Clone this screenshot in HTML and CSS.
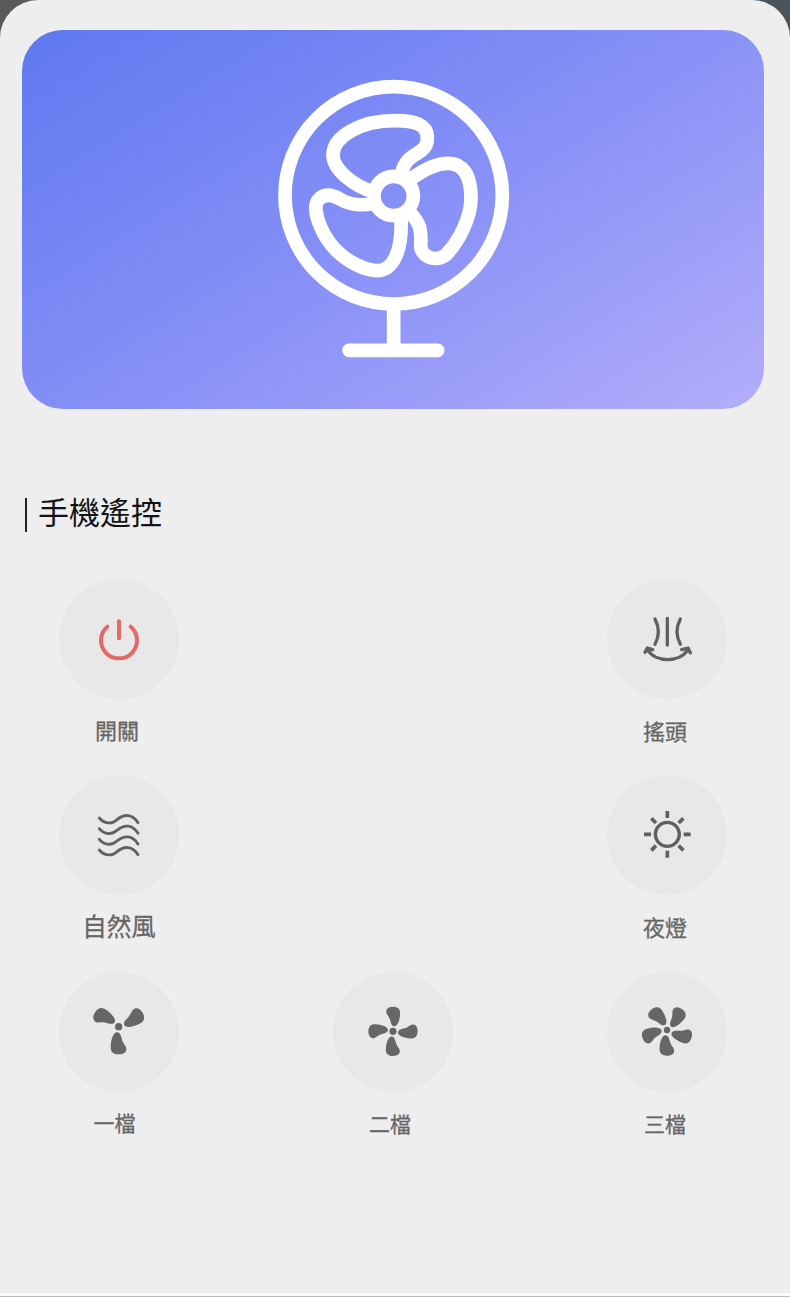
FILE: index.html
```html
<!DOCTYPE html>
<html lang="zh-Hant">
<head>
    <meta charset="UTF-8">
    <title>手機遙控</title>
    <link rel="stylesheet" href="styles.css">
</head>
<body>
    <div class="panel">
        <div class="hero">
            <svg class="hero-fan" viewBox="0 0 810 900">
                <circle cx="401" cy="376" r="326"/>
                <circle cx="401" cy="378" r="59"/>
                <path d="M424 312 C432 275 450 262 475 248 C502 232 502 215 502 200 C500 165 470 152 405 152 C300 152 219 200 219 255 C219 300 285 350 340 365"/>
                <path d="M455 325 C490 300 530 280 565 280 C610 280 633 315 633 385 C633 440 600 510 560 552 C535 578 482 565 482 525 C485 480 480 460 452 430"/>
                <path d="M340 400 C310 408 270 405 245 390 C215 372 190 370 173 392 C155 420 185 510 250 560 C290 590 330 602 355 602 C395 600 428 550 423 445"/>
                <path d="M401 715 V840 M267 841 H533"/>
            </svg>
        </div>

        <h1 class="title"><span class="title-bar"></span>手機遙控</h1>

        <!-- blade shared by the speed icons, hub at 0,0 -->
        <svg class="defs">
            <defs>
                <path id="blade" d="M-5 17 C4 17 7 27 10 39 C13 52 24 57 23 69 C21 79 12 83 0 83 C-16 83 -25 75 -24 60 C-23 36 -15 17 -5 17 Z"/>
            </defs>
        </svg>

        <div class="controls">
            <div class="control power">
                <div class="button">
                    <svg class="icon" viewBox="0 0 180 180">
                        <path stroke-width="12" d="M55 53 A54 54 0 1 0 125 53 M90 37 V88"/>
                    </svg>
                </div>
                <div class="label">開關</div>
            </div>

            <div class="control swing">
                <div class="button">
                    <svg class="icon" viewBox="0 0 180 180">
                        <path stroke-width="10" d="M54 30 Q74 68 54 106 M91 28 V108 M130 30 Q110 68 130 106"/>
                        <path stroke-width="10" d="M31 121 C55 162 129 162 153 121 M24 130 L31 117 L47 122 M134 122 L153 117 L160 131"/>
                    </svg>
                </div>
                <div class="label">搖頭</div>
            </div>

            <div class="control wind">
                <div class="button">
                    <svg class="icon" viewBox="0 0 180 180">
                        <path d="M31 39 C45 56 68 59 84 44 C105 26 130 26 147 53"/>
                        <path d="M31 71 C45 88 68 91 84 76 C105 58 130 58 147 85"/>
                        <path d="M31 103 C45 120 68 123 84 108 C105 90 130 90 147 117"/>
                        <path d="M31 135 C45 152 68 155 84 140 C105 122 130 122 147 149"/>
                    </svg>
                </div>
                <div class="label">自然風</div>
            </div>

            <div class="control light">
                <div class="button">
                    <svg class="icon rays" viewBox="0 0 180 180">
                        <circle stroke-width="10" cx="91" cy="88" r="36"/>
                        <path stroke-width="11" d="M91 18 V39 M91 137 V158 M21 88 H42 M140 88 H161 M43 40 L57 54 M139 40 L125 54 M43 136 L57 122 M139 136 L125 122"/>
                    </svg>
                </div>
                <div class="label">夜燈</div>
            </div>

            <div class="control speed-1">
                <div class="button">
                    <svg class="icon solid" viewBox="0 0 180 180">
                        <g transform="translate(89 74)">
                            <circle r="11"/>
                            <use href="#blade"/>
                            <use href="#blade" transform="rotate(121)"/>
                            <use href="#blade" transform="rotate(240)"/>
                        </g>
                    </svg>
                </div>
                <div class="label">一檔</div>
            </div>

            <div class="control speed-2">
                <div class="button">
                    <svg class="icon solid" viewBox="0 0 180 180">
                        <g transform="translate(90 88) scale(.89)">
                            <circle r="12"/>
                            <use href="#blade"/>
                            <use href="#blade" transform="rotate(90)"/>
                            <use href="#blade" transform="rotate(180)"/>
                            <use href="#blade" transform="rotate(270)"/>
                        </g>
                    </svg>
                </div>
                <div class="label">二檔</div>
            </div>

            <div class="control speed-3">
                <div class="button">
                    <svg class="icon solid" viewBox="0 0 180 180">
                        <g transform="translate(90 84) scale(.93)">
                            <circle r="10.5"/>
                            <use href="#blade"/>
                            <use href="#blade" transform="rotate(72)"/>
                            <use href="#blade" transform="rotate(144)"/>
                            <use href="#blade" transform="rotate(216)"/>
                            <use href="#blade" transform="rotate(288)"/>
                        </g>
                    </svg>
                </div>
                <div class="label">三檔</div>
            </div>
        </div>
    </div>
</body>
</html>
```
FILE: styles.css
```css
* {
    box-sizing: border-box;
}

body {
    margin: 0;
    background: linear-gradient(90deg, #5b595c, #4b535a);
    font-family: "Noto Sans CJK TC", "Noto Sans", sans-serif;
    color: #141414;
}

.panel {
    height: 1297px;
    padding: 30px 26px 0 22px;
    background: #eeeeee;
    border-radius: 38px 38px 0 0;
    border-bottom: 1px solid #bdb9b8;
    box-shadow: inset 0 -3px 0 #fbfaf9;
}

.hero {
    display: flex;
    justify-content: center;
    height: 379px;
    padding-top: 40px;
    border-radius: 41px;
    background: linear-gradient(148deg, #5f78f0 0%, #8690f6 50%, #b3adfa 100%);
}

.hero-fan {
    width: 270px;
    height: 300px;
    margin-left: 4px;
    fill: none;
    stroke: #fff;
    stroke-width: 41;
    stroke-linecap: round;
    stroke-linejoin: round;
}

.title {
    display: flex;
    align-items: center;
    height: 46px;
    margin: 79px 0 0;
    padding-left: 3px;
    font-size: 31px;
    font-weight: 400;
    line-height: 46px;
}

.title-bar {
    width: 2px;
    height: 34px;
    margin: 8px 11px 0 0;
    background: #222;
}

.defs {
    display: block;
    width: 0;
    height: 0;
}

.controls {
    display: grid;
    grid-template-columns: repeat(3, 120px);
    grid-template-rows: 196px 197px 197px;
    justify-content: space-between;
    padding: 45px 37px 0;
}

.swing,
.light {
    grid-column: 3;
}

.button {
    display: flex;
    align-items: center;
    justify-content: center;
    width: 120px;
    height: 120px;
    border-radius: 50%;
    background: #e8e8e8;
}

.icon {
    width: 60px;
    height: 60px;
    fill: none;
    stroke: #606060;
    stroke-width: 8.5;
    stroke-linecap: round;
    stroke-linejoin: round;
}

.power .icon {
    stroke: #e56767;
}

.rays {
    stroke-linecap: butt;
}

.solid {
    fill: #666;
    stroke: none;
}

.label {
    height: 32px;
    margin-top: 15px;
    padding-right: 4px;
    font-size: 22px;
    line-height: 32px;
    text-align: center;
    color: #666;
    -webkit-text-stroke: 0.3px #666;
}

.power .label {
    margin-top: 14px;
}

.wind .label {
    padding-right: 0;
    font-size: 24.5px;
}

.speed-1 .label,
.speed-2 .label,
.speed-3 .label {
    font-size: 21px;
}

.speed-1 .label {
    margin-top: 14px;
    padding-right: 9px;
}

.speed-2 .label {
    padding-right: 6px;
}
```
